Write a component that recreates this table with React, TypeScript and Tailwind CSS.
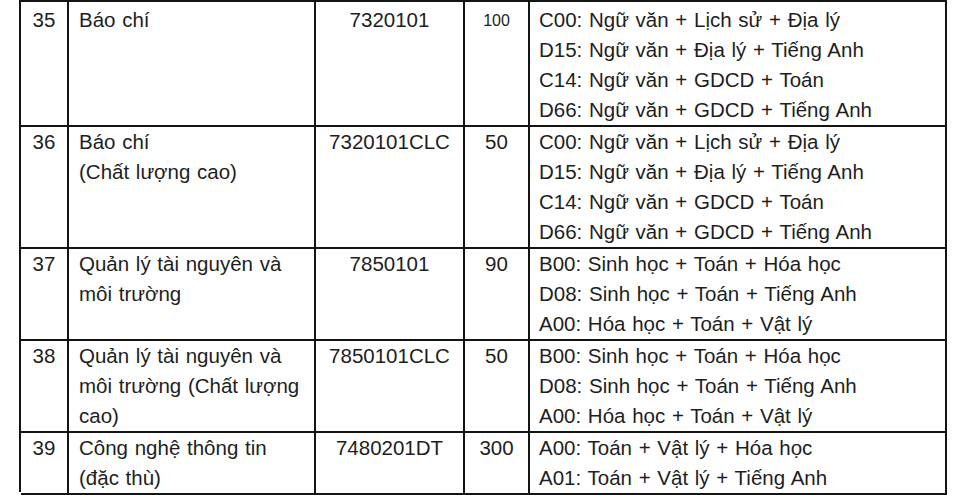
const rows = [
  {
    no: '35',
    name: ['Báo chí'],
    code: '7320101',
    quota: '100',
    small: true,
    lines: 4,
    subjects: [
      'C00: Ngữ văn + Lịch sử + Địa lý',
      'D15: Ngữ văn + Địa lý + Tiếng Anh',
      'C14: Ngữ văn + GDCD + Toán',
      'D66: Ngữ văn + GDCD + Tiếng Anh',
    ],
  },
  {
    no: '36',
    name: ['Báo chí', '(Chất lượng cao)'],
    code: '7320101CLC',
    quota: '50',
    lines: 4,
    subjects: [
      'C00: Ngữ văn + Lịch sử + Địa lý',
      'D15: Ngữ văn + Địa lý + Tiếng Anh',
      'C14: Ngữ văn + GDCD + Toán',
      'D66: Ngữ văn + GDCD + Tiếng Anh',
    ],
  },
  {
    no: '37',
    name: ['Quản lý tài nguyên và', 'môi trường'],
    code: '7850101',
    quota: '90',
    lines: 3,
    subjects: [
      'B00: Sinh học + Toán + Hóa học',
      'D08: Sinh học + Toán + Tiếng Anh',
      'A00: Hóa học + Toán + Vật lý',
    ],
  },
  {
    no: '38',
    name: ['Quản lý tài nguyên và', 'môi trường (Chất lượng', 'cao)'],
    code: '7850101CLC',
    quota: '50',
    lines: 3,
    subjects: [
      'B00: Sinh học + Toán + Hóa học',
      'D08: Sinh học + Toán + Tiếng Anh',
      'A00: Hóa học + Toán + Vật lý',
    ],
  },
  {
    no: '39',
    name: ['Công nghệ thông tin', '(đặc thù)'],
    code: '7480201DT',
    quota: '300',
    lines: 2,
    subjects: ['A00: Toán + Vật lý + Hóa học', 'A01: Toán + Vật lý + Tiếng Anh'],
  },
];

const heights: Record<number, string> = {
  2: 'h-[62px]',
  3: 'h-[92px]',
  4: 'h-[122px]',
};

export default function App() {
  return (
    <div className="w-[960px] h-[495px] bg-white overflow-hidden font-['Liberation_Sans',Arial,sans-serif] text-[20.5px] leading-[30px] text-[#1e1e1e] [word-spacing:1px]">
      <div className="ml-[19px] w-[928px] border-l-2 border-t-2 border-[#141414]">
        {rows.map((r) => (
          <div key={r.no} className={`grid grid-cols-[48px_247px_149px_65px_417px] ${heights[r.lines]}`}>
            <div className="border-r-2 border-b-2 border-[#141414] pt-[3px] text-center">{r.no}</div>
            <div className="border-r-2 border-b-2 border-[#141414] pt-[3px] pl-[10px] whitespace-nowrap">
              {r.name.map((n) => (
                <div key={n}>{n}</div>
              ))}
            </div>
            <div className="border-r-2 border-b-2 border-[#141414] pt-[3px] text-center">{r.code}</div>
            <div
              className={`border-r-2 border-b-2 border-[#141414] text-center ${
                r.small ? 'text-[16px] pt-[4px]' : 'pt-[3px]'
              }`}
            >
              {r.quota}
            </div>
            <div className="border-r-2 border-b-2 border-[#141414] pt-[3px] pl-[9px] whitespace-nowrap">
              {r.subjects.map((s) => (
                <div key={s}>{s}</div>
              ))}
            </div>
          </div>
        ))}
      </div>
    </div>
  );
}
